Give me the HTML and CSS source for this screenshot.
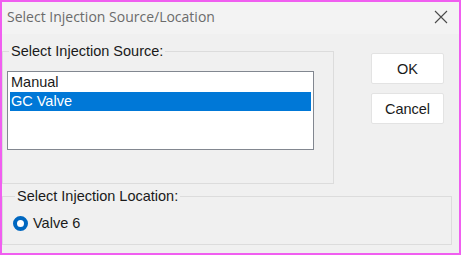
FILE: index.html
```html
<!DOCTYPE html>
<html lang="en">
<head>
<meta charset="UTF-8">
<title>Select Injection Source/Location</title>
<link rel="stylesheet" href="styles.css">
</head>
<body>

<div class="window">
  <div class="titlebar">
    <span class="title">Select Injection Source/Location</span>
    <svg class="close" width="14" height="14" viewBox="0 0 14 14">
      <path d="M1 1 L13 13 M13 1 L1 13" stroke="#4a4a4a" stroke-width="1.1" fill="none"/>
    </svg>
  </div>

  <div class="dialog">
    <div class="top-row">
      <fieldset class="group source-group">
        <legend>Select Injection Source:</legend>
        <div class="listbox">
          <div class="list-item">Manual</div>
          <div class="list-item selected">GC Valve</div>
        </div>
      </fieldset>

      <div class="buttons">
        <button type="button">OK</button>
        <button type="button">Cancel</button>
      </div>
    </div>

    <fieldset class="group location-group">
      <legend>Select Injection Location:</legend>
      <label class="radio">
        <span class="radio-dot"></span>
        Valve 6
      </label>
    </fieldset>
  </div>
</div>

</body>
</html>
```

FILE: styles.css
```css
body {
  margin: 0;
  font-family: "Liberation Sans", Arial, sans-serif;
  font-size: 14.5px;
  color: #1a1a1a;
}
.window {
  width: 461px;
  height: 255px;
  box-sizing: border-box;
  border: 2px solid #f05ef0;
  background: #f0f0f0;
}
.titlebar {
  height: 32px;
  box-sizing: border-box;
  background: #f3f3f3;
  display: flex;
  align-items: center;
  justify-content: space-between;
  padding: 0 11px 3px 5px;
}
.title {
  font-family: "Open Sans", "Noto Sans", sans-serif;
  font-size: 14px;
  color: #6b6b6b;
}
.close {
  display: block;
}
.dialog {
  padding: 10px 0 0 0;
}
.top-row {
  display: flex;
}
.group {
  margin: 0;
  padding: 0;
  border: 1px solid #dcdcdc;
  min-width: 0;
}
.group legend {
  margin-left: 2px;
  padding: 0 2px;
  line-height: 15px;
}
.source-group {
  width: 332px;
  height: 140px;
  box-sizing: border-box;
  padding: 12px 0 0 4px;
}
.listbox {
  width: 301px;
  height: 75px;
  background: #fff;
  border: 1px solid #828790;
  padding: 1px 2px;
}
.list-item {
  height: 19px;
  line-height: 19px;
  padding-left: 1px;
}
.list-item.selected {
  background: #0078d7;
  color: #fff;
}
.buttons {
  display: flex;
  flex-direction: column;
  gap: 9px;
  margin: 9px 0 0 37px;
}
.buttons button {
  width: 73px;
  height: 31px;
  background: #fff;
  border: 1px solid #e3e3e3;
  border-radius: 2px;
  font-family: "Liberation Sans", Arial, sans-serif;
  font-size: 14.5px;
  color: #1a1a1a;
  padding: 0;
}
.location-group {
  width: 450px;
  height: 56px;
  box-sizing: border-box;
  margin-top: 5px;
  padding: 11px 0 0 10px;
}
.radio {
  display: flex;
  align-items: center;
  gap: 5px;
}
.radio-dot {
  width: 7px;
  height: 7px;
  border-radius: 50%;
  background: #fff;
  border: 4px solid #0067c0;
}
```
